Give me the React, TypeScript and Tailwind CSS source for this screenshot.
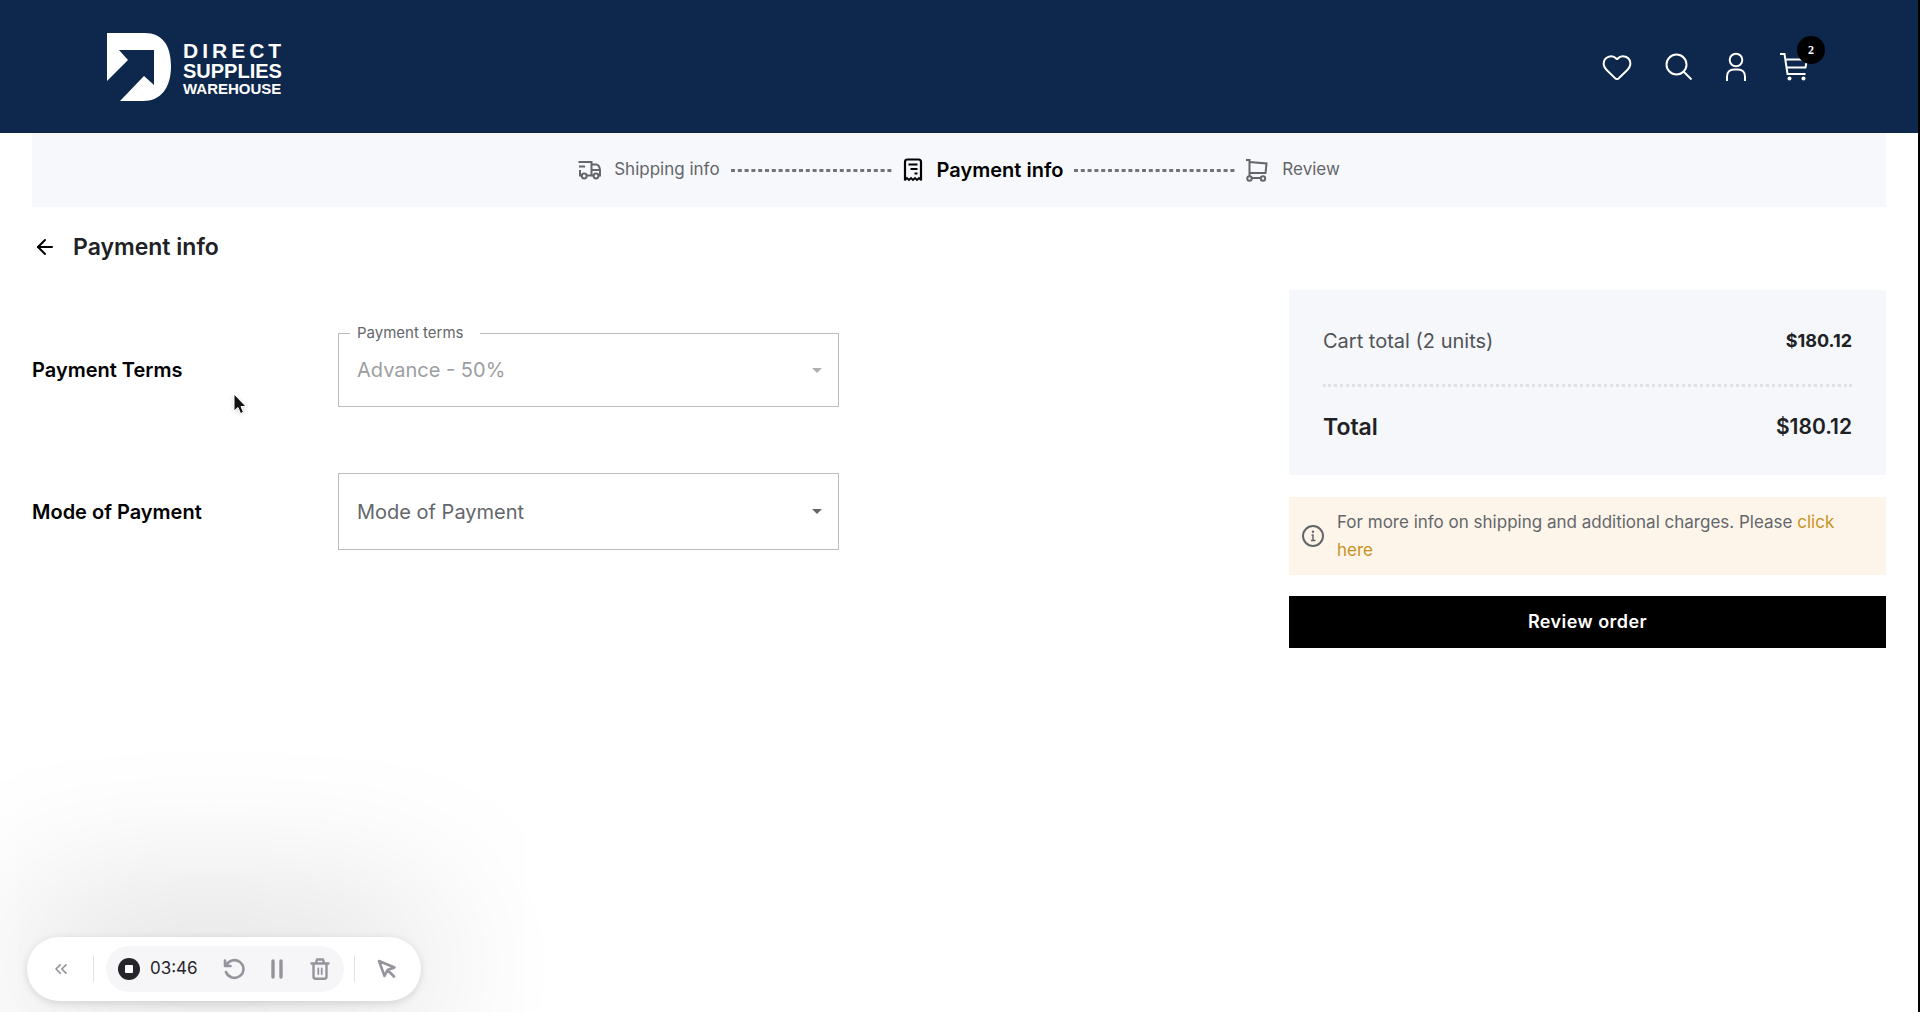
import type { ReactNode } from "react";
import { ArrowLeft, ChevronsLeft, Heart } from "lucide-react";

function Logo() {
  return (
    <a href="#home" className="flex items-center gap-3 text-white">
      <svg viewBox="0 0 64 68" className="h-[68px] w-16" fill="currentColor" aria-hidden="true">
        <path d="M0 0h38C55 0 64 12 64 33c0 22-10 35-28 35H13l24-25 10 9V17H12l9 10L0 48z" />
      </svg>
      <span className="flex flex-col pt-1 font-['Liberation_Sans',sans-serif] font-bold">
        <span className="text-[21px] leading-5 tracking-[4px]">DIRECT</span>
        <span className="text-xl leading-5">SUPPLIES</span>
        <span className="text-[15px] leading-4">WAREHOUSE</span>
      </span>
    </a>
  );
}

function SearchIcon() {
  return (
    <svg viewBox="0 0 28 28" className="size-7" fill="none" stroke="currentColor" strokeWidth="2" aria-hidden="true">
      <circle cx="11.5" cy="11.5" r="10" />
      <path d="m18.5 18.5 8 8" />
    </svg>
  );
}

function UserIcon() {
  return (
    <svg viewBox="0 0 22 30" className="h-[30px] w-[22px]" fill="none" stroke="currentColor" strokeWidth="2" aria-hidden="true">
      <circle cx="11" cy="8" r="6.3" />
      <path d="M2 29v-4.500c0-4 2.500-7 7-7h4c4.500 0 7 3 7 7V29" />
    </svg>
  );
}

function CartIcon() {
  return (
    <svg viewBox="0 0 30 30" className="size-[30px]" fill="none" stroke="currentColor" strokeWidth="2" aria-hidden="true">
      <path d="M1 2h4.500l3 20h18M6.500 7.500H28l-1.500 8H8" />
      <circle cx="10.500" cy="26.500" r="2" fill="currentColor" stroke="none" />
      <circle cx="24.500" cy="26.500" r="2" fill="currentColor" stroke="none" />
    </svg>
  );
}

function TruckIcon() {
  return (
    <svg viewBox="0 0 24 20" className="h-5 w-6" fill="none" stroke="currentColor" strokeWidth="2" aria-hidden="true">
      <path d="M.500 2h13v13.500H9M1 6.500h6M2 10v5.500h1.500M13.500 4.500h4.500c2.500 0 3.500 2 4 5.500v5.500h-1.500M13.500 10H22M14 15.500h1.500" />
      <circle cx="6.200" cy="16" r="2.400" />
      <circle cx="18" cy="16" r="2.400" />
    </svg>
  );
}

function ReceiptIcon() {
  return (
    <svg viewBox="0 0 20 24" className="h-6 w-5" fill="none" stroke="currentColor" strokeWidth="2.200" aria-hidden="true">
      <path d="M2 22.500V4c0-1.700.800-2.500 2.500-2.500h11c1.700 0 2.500.800 2.500 2.500v18.500" />
      <path d="m2 22 2-2 2 2 2-2 2 2 2-2 2 2 2-2 2 2" strokeWidth="1.800" />
      <path d="M5.500 6.500h9M7.500 11h7M11.500 15.500h3" />
    </svg>
  );
}

function TrolleyIcon() {
  return (
    <svg viewBox="0 0 22 24" className="h-6 w-[22px]" fill="none" stroke="currentColor" strokeWidth="2" aria-hidden="true">
      <path d="M0 2h3.500v17M3.500 4 20.500 5.500l-1 9.500h-16M5.500 20h9" />
      <circle cx="3.500" cy="20.500" r="2.200" />
      <circle cx="17" cy="20.500" r="2.200" />
    </svg>
  );
}

function InfoIcon() {
  return (
    <svg viewBox="0 0 24 24" className="size-6 shrink-0" fill="none" stroke="currentColor" strokeWidth="2" aria-hidden="true">
      <circle cx="12" cy="12" r="10" />
      <path d="M10.500 11H12v5.500M10 16.500h4.500" strokeWidth="1.500" />
      <circle cx="12" cy="7.800" r="1.200" fill="currentColor" stroke="none" />
    </svg>
  );
}

function Header() {
  return (
    <header className="flex h-[133px] items-center justify-between bg-[#0e274c] pr-[109px] pl-[107px]">
      <Logo />
      <nav className="flex items-center gap-8 text-white">
        <button type="button" aria-label="Wishlist">
          <Heart className="size-8" strokeWidth={1.5} />
        </button>
        <button type="button" aria-label="Search">
          <SearchIcon />
        </button>
        <button type="button" aria-label="Account">
          <UserIcon />
        </button>
        <button type="button" aria-label="Cart" className="relative">
          <CartIcon />
          <span className="absolute -top-4 -right-4 flex size-7 items-center justify-center rounded-full bg-black font-['Liberation_Serif',serif] text-xs font-bold">
            2
          </span>
        </button>
      </nav>
    </header>
  );
}

function StepLine() {
  return (
    <svg className="mx-[11px] h-[3px] w-[161px]" aria-hidden="true">
      <line x1="0" y1="1.500" x2="161" y2="1.500" stroke="#707478" strokeWidth="3" strokeDasharray="4 2.800" />
    </svg>
  );
}

function Steps() {
  return (
    <ol className="flex h-[74px] items-center justify-center bg-[#f7f8fb] text-[17px] text-[#63666a]">
      <li className="flex items-center gap-3">
        <TruckIcon />
        Shipping info
      </li>
      <StepLine />
      <li className="flex items-center gap-[14px] text-xl font-semibold text-black" aria-current="step">
        <ReceiptIcon />
        Payment info
      </li>
      <StepLine />
      <li className="flex items-center gap-[14px]">
        <TrolleyIcon />
        Review
      </li>
    </ol>
  );
}

function Caret({ className }: { className: string }) {
  return (
    <svg viewBox="0 0 10 5" className={className} fill="currentColor" aria-hidden="true">
      <path d="M0 0h10L5 5z" />
    </svg>
  );
}

function PaymentForm() {
  return (
    <form className="flex flex-col gap-[66px] pt-[43px] text-xl">
      <div className="flex items-center">
        <label htmlFor="terms" className="w-[306px] font-semibold text-black">
          Payment Terms
        </label>
        <div className="relative w-[501px]">
          <span className="absolute -top-3 left-3 bg-white pr-4 pl-[7px] text-[15px] leading-6 text-[#63666a]">
            Payment terms
          </span>
          <select
            id="terms"
            disabled
            className="h-[74px] w-full appearance-none border border-[#bdbdbf] bg-transparent px-[18px] text-[#9d9da0] opacity-100"
          >
            <option>Advance - 50%</option>
          </select>
          <Caret className="pointer-events-none absolute top-[35px] right-[17px] h-[5px] w-[10px] text-[#b0b0b3]" />
        </div>
      </div>
      <div className="flex items-center">
        <label htmlFor="mode" className="w-[306px] font-semibold text-black">
          Mode of Payment
        </label>
        <div className="relative w-[501px]">
          <select
            id="mode"
            className="h-[77px] w-full appearance-none border border-[#bdbdbf] bg-transparent px-[18px] text-[#63666a]"
          >
            <option>Mode of Payment</option>
          </select>
          <Caret className="pointer-events-none absolute top-9 right-[17px] h-[5px] w-[10px] text-[#63666a]" />
        </div>
      </div>
    </form>
  );
}

function Summary() {
  return (
    <aside className="flex w-[597px] flex-col">
      <dl className="bg-[#f6f7fa] px-[34px] pt-9 pb-8">
        <div className="flex items-center justify-between border-b-[3px] border-dotted border-[#e0e1e4] pb-7 text-xl leading-[30px]">
          <dt className="text-[#505357]">Cart total (2 units)</dt>
          <dd className="text-lg font-bold text-[#202124]">$180.12</dd>
        </div>
        <div className="flex items-center justify-between pt-6 leading-8 font-semibold text-[#202124]">
          <dt className="text-[23px]">Total</dt>
          <dd className="text-[21px]">$180.12</dd>
        </div>
      </dl>
      <div className="mt-[22px] flex items-center gap-3 bg-[#fdf5ea] px-3 py-[11px] text-[#63666a]">
        <InfoIcon />
        <p className="text-[17px] leading-7">
          For more info on shipping and additional charges. Please{" "}
          <a href="#shipping" className="text-[#c9921f]">
            click here
          </a>
        </p>
      </div>
      <button type="button" className="mt-[21px] h-[52px] bg-black text-lg font-semibold tracking-wide text-white">
        Review order
      </button>
    </aside>
  );
}

function RecorderButton({ label, children }: { label: string; children: ReactNode }) {
  return (
    <button type="button" aria-label={label} className="flex size-6 items-center justify-center">
      {children}
    </button>
  );
}

function RecorderBar() {
  return (
    <div className="fixed bottom-[11px] left-[27px] flex h-16 items-center rounded-full bg-white px-[22px] text-[#94949c] shadow-[0_2px_10px_rgba(0,0,0,0.14),0_-4px_170px_10px_rgba(0,0,0,0.22)]">
      <RecorderButton label="Collapse">
        <ChevronsLeft className="size-5" strokeWidth={2} />
      </RecorderButton>
      <span className="mr-3 ml-5 h-[26px] w-px bg-[#e2e2e6]" />
      <div className="flex h-[46px] items-center rounded-full bg-[#f6f6f9] px-3">
        <button type="button" aria-label="Stop" className="flex size-[22px] items-center justify-center rounded-full bg-[#25252b]">
          <span className="size-2 rounded-[1px] bg-white" />
        </button>
        <span className="mr-6 ml-[10px] text-[17px] text-[#25252b]">03:46</span>
        <div className="flex items-center gap-[19px]">
          <RecorderButton label="Restart">
            <svg viewBox="0 0 22 22" className="size-[22px]" fill="none" stroke="currentColor" strokeWidth="2.600" strokeLinecap="round" strokeLinejoin="round" aria-hidden="true">
              <path d="M2 2.500v5.500h5.500M3 8A9 8.800 0 1 1 3 14" />
            </svg>
          </RecorderButton>
          <RecorderButton label="Pause">
            <svg viewBox="0 0 14 20" className="h-5 w-[14px]" stroke="currentColor" strokeWidth="3.400" strokeLinecap="round" aria-hidden="true">
              <path d="M3 2v16M11 2v16" />
            </svg>
          </RecorderButton>
          <RecorderButton label="Delete">
            <svg viewBox="0 0 20 22" className="h-[22px] w-5" fill="none" stroke="currentColor" strokeWidth="2.400" strokeLinecap="round" strokeLinejoin="round" aria-hidden="true">
              <path d="M1.500 5.500h17M6 5l1-3.500h6L14 5M3.500 6v12.500c0 1.500.500 2.200 2 2.200h9c1.500 0 2-.700 2-2.200V6" />
              <path d="M8.300 10.500v5.500M11.700 10.500v5.500" strokeWidth="1.800" />
            </svg>
          </RecorderButton>
        </div>
      </div>
      <span className="mr-5 ml-[10px] h-[26px] w-px bg-[#e2e2e6]" />
      <RecorderButton label="Pointer">
        <svg viewBox="0 0 20 20" className="size-5" fill="none" stroke="currentColor" strokeWidth="2.600" strokeLinejoin="round" strokeLinecap="round" aria-hidden="true">
          <path d="m2 2 5.500 15 3-6 7-2.500zM11 11.500l6 6" />
        </svg>
      </RecorderButton>
    </div>
  );
}

function MousePointer() {
  return (
    <svg viewBox="0 0 14 22" className="pointer-events-none absolute top-[393px] left-[233px] h-[22px] w-[14px] drop-shadow-sm" aria-hidden="true">
      <path d="M1 1v17l4-3.500 2.500 6 3-1.300L8 13.500h5z" fill="#111" stroke="#fff" strokeWidth="1" />
    </svg>
  );
}

export default function App() {
  return (
    <div className="relative min-h-screen border-r-2 border-black bg-white font-[Inter,sans-serif]">
      <Header />
      <main className="px-8">
        <Steps />
        <div className="flex h-20 items-center gap-4 pl-px">
          <a href="#shipping" aria-label="Back">
            <ArrowLeft className="size-6" strokeWidth={2} />
          </a>
          <h1 className="text-[23px] font-semibold text-[#202124]">Payment info</h1>
        </div>
        <div className="flex items-start justify-between pt-[3px]">
          <PaymentForm />
          <Summary />
        </div>
      </main>
      <RecorderBar />
      <MousePointer />
    </div>
  );
}
